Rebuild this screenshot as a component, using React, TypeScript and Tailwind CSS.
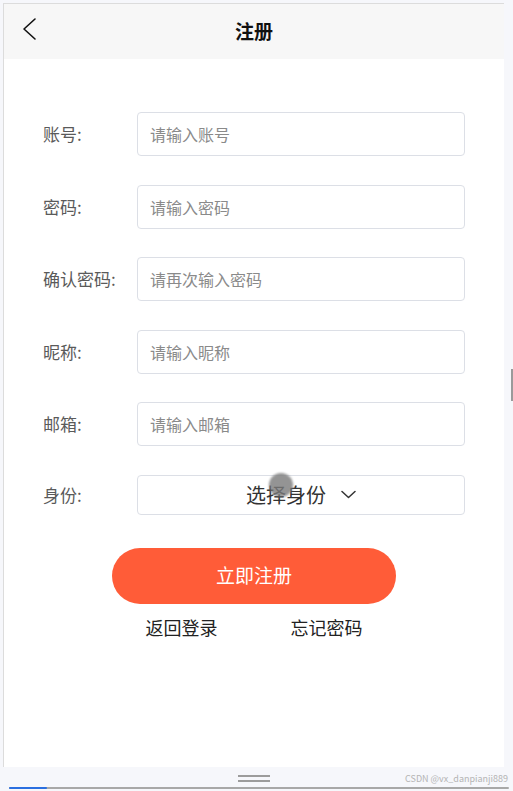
import { useState } from 'react'

const FIELDS = [
  { label: '账号:', placeholder: '请输入账号', type: 'text' },
  { label: '密码:', placeholder: '请输入密码', type: 'password' },
  { label: '确认密码:', placeholder: '请再次输入密码', type: 'password' },
  { label: '昵称:', placeholder: '请输入昵称', type: 'text' },
  { label: '邮箱:', placeholder: '请输入邮箱', type: 'text' },
]

function BackIcon() {
  return (
    <svg width="16" height="24" viewBox="0 0 16 24" fill="none">
      <path d="M14 2 L3 12 L14 22" stroke="#111" strokeWidth="1.6" strokeLinecap="round" strokeLinejoin="round" />
    </svg>
  )
}

function ChevronDown() {
  return (
    <svg width="15" height="9" viewBox="0 0 15 9" fill="none">
      <path d="M1 1.5 L7.5 7.5 L14 1.5" stroke="#333" strokeWidth="1.5" strokeLinecap="round" strokeLinejoin="round" />
    </svg>
  )
}

export default function App() {
  const [values, setValues] = useState<string[]>(FIELDS.map(() => ''))

  return (
    <div
      className="flex h-[791px] w-[513px] flex-col overflow-hidden bg-[#f6f7fb]"
      style={{ fontFamily: '"Noto Sans CJK SC", "Noto Sans", sans-serif' }}
    >
      {/* Device frame */}
      <div className="relative flex h-[767px] pl-[3px] pt-[3px]">
        <div className="flex w-[501px] flex-col border-l border-t border-[#dcdcdc] bg-white">
          {/* Nav bar */}
          <div className="relative flex h-[55px] items-center justify-center bg-[#f7f7f7]">
            <div className="absolute left-[17px] top-[13px]">
              <BackIcon />
            </div>
            <h1 className="text-[19px] font-bold text-[#111]">注册</h1>
          </div>

          {/* Form */}
          <div className="flex flex-col gap-[28.5px] pl-[39px] pt-[53px]">
            {FIELDS.map((f, i) => (
              <div key={f.label} className="flex items-center">
                <span className="w-[94px] text-[17px] text-[#5a5a5a]">{f.label}</span>
                <input
                  type={f.type}
                  value={values[i]}
                  onChange={(e) => {
                    const next = [...values]
                    next[i] = e.target.value
                    setValues(next)
                  }}
                  placeholder={f.placeholder}
                  className="h-[44px] w-[328px] rounded-[4px] border border-[#dcdfe6] px-[12px] text-[16px] text-[#333] outline-none placeholder:text-[#8a8a8a]"
                />
              </div>
            ))}
            <div className="flex items-center">
              <span className="w-[94px] text-[17px] text-[#5a5a5a]">身份:</span>
              <div className="relative flex h-[40px] w-[328px] items-center justify-center gap-[15px] rounded-[4px] border border-[#dcdfe6]">
                <span className="text-[20px] text-[#333]">选择身份</span>
                <ChevronDown />
                {/* touch emulation cursor */}
                <div className="absolute left-[131px] top-[-3px] h-[24px] w-[24px] rounded-full bg-[#7a7a7a] opacity-80 blur-[1px]" />
              </div>
            </div>
          </div>

          <div className="mt-[33px] flex justify-center">
            <button className="h-[56px] w-[284px] rounded-full bg-[#ff5c38] text-[19px] text-white">立即注册</button>
          </div>

          <div className="mt-[10px] flex justify-center gap-[73px] text-[18px] text-[#222]">
            <span>返回登录</span>
            <span>忘记密码</span>
          </div>
        </div>

        {/* right scroll handle */}
        <div className="absolute right-0 top-[369px] h-[32px] w-[2px] bg-[#9a9a9a]" />
      </div>

      {/* Bottom bar */}
      <div className="relative flex flex-1 flex-col items-center pr-[6px] pt-[8px]">
        <div className="h-[2px] w-[32px] bg-[#9c9c9c]" />
        <div className="mt-[3px] h-[2px] w-[32px] bg-[#9c9c9c]" />
        <span className="absolute right-[5px] top-[5px] text-[9px] text-[#b4b4b4]">CSDN @vx_danpianji889</span>
        <div className="absolute bottom-[2px] left-[9px] h-[2px] w-[500px] rounded-full bg-[#a8a8a8]">
          <div className="h-[2px] w-[38px] rounded-full bg-[#2a6fe0]" />
        </div>
      </div>
    </div>
  )
}
